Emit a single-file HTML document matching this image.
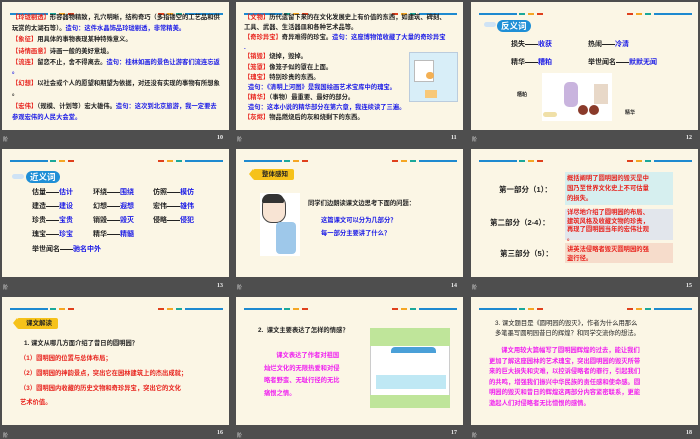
<!DOCTYPE html>
<html><head><meta charset="utf-8"><style>
*{margin:0;padding:0;box-sizing:border-box}
body{width:700px;height:438px;background:#4e4e4e;position:relative;overflow:hidden;font-family:"Liberation Sans","Noto Sans CJK SC",sans-serif;font-weight:bold}
.s{position:absolute;width:227px;height:128px;background:#fbf6e5;overflow:hidden}
.l{position:absolute;height:1.5px}
.lab{position:absolute;color:#ddd;font-size:5px;font-weight:normal}
.num{position:absolute;color:#eee;font-size:6px;font-family:"Liberation Serif",serif}
.t{position:absolute;font-size:6.3px;white-space:nowrap;color:#222;line-height:8px}
.w{font-size:7px}
.r{color:#e8231d}.b{color:#1a1ae6}.m{color:#f020f0}.k{color:#222}
.tag{position:absolute;background:#f6c21a;font-size:6.5px;color:#222;padding:1px 6px 1px 9px;border-radius:2px;height:11px;line-height:9px}
.tag:before{content:"";position:absolute;left:-4px;top:0;border-right:4px solid #f6c21a;border-top:5.5px solid transparent;border-bottom:5.5px solid transparent}
.bub{position:absolute;background:#1f8fd6;color:#fff;font-size:8.5px;border-radius:6px;padding:0 4px;height:12px;line-height:12px}
.ln{display:inline-block;width:13px;height:1px;background:#222;vertical-align:middle}
</style></head><body>

<!-- slide 10 -->
<div class="s" style="left:2px;top:2px">
<div class="l" style="left:8px;top:11px;width:38px;background:#1e8ad0"></div><div class="l" style="left:48px;top:11px;width:6px;background:#1aa89a"></div><div class="l" style="left:57px;top:11px;width:6px;background:#f5a623"></div><div class="l" style="left:66px;top:11px;width:6px;background:#e0401c"></div>
<div class="l" style="left:156px;top:11px;width:6px;background:#e0401c"></div><div class="l" style="left:165px;top:11px;width:6px;background:#f5a623"></div><div class="l" style="left:174px;top:11px;width:6px;background:#1aa89a"></div><div class="l" style="left:183px;top:11px;width:38px;background:#1e8ad0"></div>
<div class="t" style="left:10px;top:12px"><span class="r">【玲珑剔透】</span>形容器物精致，孔穴明晰，结构奇巧（多指镂空的工艺品和供</div>
<div class="t" style="left:10px;top:23px">玩赏的太湖石等）。<span class="b">造句：这件水晶饰品玲珑剔透，非常精美。</span></div>
<div class="t" style="left:10px;top:34px"><span class="r">【象征】</span>用具体的事物表现某种特殊意义。</div>
<div class="t" style="left:10px;top:46px"><span class="r">【诗情画意】</span>诗画一般的美好意境。</div>
<div class="t" style="left:10px;top:57px"><span class="r">【流连】</span>留恋不止，舍不得离去。<span class="b">造句：桂林如画的景色让游客们流连忘返</span></div>
<div class="t b" style="left:10px;top:66px">。</div>
<div class="t" style="left:10px;top:78px"><span class="r">【幻想】</span>以社会或个人的愿望和期望为依据，对还没有实现的事物有所想象</div>
<div class="t" style="left:10px;top:88px">。</div>
<div class="t" style="left:10px;top:101px"><span class="r">【宏伟】</span>（规模、计划等）宏大雄伟。<span class="b">造句：这次到北京旅游，我一定要去</span></div>
<div class="t b" style="left:10px;top:112px">参观宏伟的人民大会堂。</div>
</div>
<div class="lab" style="left:3px;top:136px">阶</div><div class="num" style="left:217px;top:135px">10</div>

<!-- slide 11 -->
<div class="s" style="left:236px;top:2px">
<div class="l" style="left:8px;top:11px;width:38px;background:#1e8ad0"></div><div class="l" style="left:48px;top:11px;width:6px;background:#1aa89a"></div><div class="l" style="left:57px;top:11px;width:6px;background:#f5a623"></div><div class="l" style="left:66px;top:11px;width:6px;background:#e0401c"></div>
<div class="l" style="left:156px;top:11px;width:6px;background:#e0401c"></div><div class="l" style="left:165px;top:11px;width:6px;background:#f5a623"></div><div class="l" style="left:174px;top:11px;width:6px;background:#1aa89a"></div><div class="l" style="left:183px;top:11px;width:38px;background:#1e8ad0"></div>
<div style="position:absolute;left:173px;top:50px;width:49px;height:50px;background:#d8eef8;border:1px solid #bcd"></div>
<div style="position:absolute;left:178px;top:58px;width:20px;height:22px;background:#fff;border:1px solid #bbb"></div>
<div style="position:absolute;left:190px;top:70px;width:8px;height:7px;background:#f3b054;border-radius:4px"></div>
<div style="position:absolute;left:189px;top:88px;width:12px;height:8px;background:#f8c878"></div>
<div class="t" style="left:8px;top:12px"><span class="r">【文物】</span>历代遗留下来的在文化发展史上有价值的东西，如建筑、碑刻、</div>
<div class="t" style="left:8px;top:22px">工具、武器、生活器皿和各种艺术品等。</div>
<div class="t" style="left:8px;top:32px"><span class="r">【奇珍异宝】</span>奇异难得的珍宝。<span class="b">造句：这座博物馆收藏了大量的奇珍异宝</span></div>
<div class="t b" style="left:8px;top:42px">.</div>
<div class="t" style="left:8px;top:51px"><span class="r">【销毁】</span>烧掉，毁掉。</div>
<div class="t" style="left:8px;top:62px"><span class="r">【笼罩】</span>像笼子似的罩在上面。</div>
<div class="t" style="left:8px;top:72px"><span class="r">【瑰宝】</span>特别珍贵的东西。</div>
<div class="t b" style="left:12px;top:82px">造句：《清明上河图》是我国绘画艺术宝库中的瑰宝。</div>
<div class="t" style="left:8px;top:92px"><span class="r">【精华】</span>（事物）最重要、最好的部分。</div>
<div class="t b" style="left:12px;top:102px">造句：这本小说的精华部分在第六章，我连续读了三遍。</div>
<div class="t" style="left:8px;top:112px"><span class="r">【灰烬】</span>物品燃烧后的灰和烧剩下的东西。</div>
</div>
<div class="lab" style="left:237px;top:136px">阶</div><div class="num" style="left:451px;top:135px">11</div>

<!-- slide 12 -->
<div class="s" style="left:471px;top:2px">
<div class="l" style="left:8px;top:11px;width:38px;background:#1e8ad0"></div><div class="l" style="left:48px;top:11px;width:6px;background:#1aa89a"></div><div class="l" style="left:57px;top:11px;width:6px;background:#f5a623"></div><div class="l" style="left:66px;top:11px;width:6px;background:#e0401c"></div>
<div class="l" style="left:156px;top:11px;width:6px;background:#e0401c"></div><div class="l" style="left:165px;top:11px;width:6px;background:#f5a623"></div><div class="l" style="left:174px;top:11px;width:6px;background:#1aa89a"></div><div class="l" style="left:183px;top:11px;width:38px;background:#1e8ad0"></div>
<div style="position:absolute;left:13px;top:20px;width:12px;height:5px;background:#cfe3f5;border-radius:3px"></div>
<div class="bub" style="left:26px;top:18px">反义词</div>
<div class="t w" style="left:40px;top:39px">损失<span class="ln"></span><span class="b">收获</span></div>
<div class="t w" style="left:117px;top:39px">热闹<span class="ln"></span><span class="b">冷清</span></div>
<div class="t w" style="left:40px;top:57px">精华<span class="ln"></span><span class="b">糟粕</span></div>
<div class="t w" style="left:117px;top:57px">举世闻名<span class="ln"></span><span class="b">默默无闻</span></div>
<div style="position:absolute;left:71px;top:71px;width:70px;height:48px;background:#fff"></div>
<div style="position:absolute;left:93px;top:80px;width:14px;height:25px;background:#c9b4de;border-radius:5px"></div>
<div style="position:absolute;left:123px;top:82px;width:14px;height:20px;background:#e8d8c8"></div>
<div style="position:absolute;left:107px;top:103px;width:10px;height:10px;background:#8a3a2a;border-radius:5px"></div>
<div style="position:absolute;left:118px;top:103px;width:10px;height:10px;background:#8a3a2a;border-radius:5px"></div>
<div style="position:absolute;left:72px;top:110px;width:14px;height:5px;background:#f0e0a8;border-radius:3px"></div>
<div class="t" style="left:46px;top:89px;font-size:5px">糟粕</div>
<div class="t" style="left:154px;top:107px;font-size:5px">精华</div>
</div>
<div class="lab" style="left:472px;top:136px">阶</div><div class="num" style="left:686px;top:135px">12</div>

<!-- slide 13 -->
<div class="s" style="left:2px;top:149px">
<div class="l" style="left:8px;top:11px;width:38px;background:#1e8ad0"></div><div class="l" style="left:48px;top:11px;width:6px;background:#1aa89a"></div><div class="l" style="left:57px;top:11px;width:6px;background:#f5a623"></div><div class="l" style="left:66px;top:11px;width:6px;background:#e0401c"></div>
<div class="l" style="left:156px;top:11px;width:6px;background:#e0401c"></div><div class="l" style="left:165px;top:11px;width:6px;background:#f5a623"></div><div class="l" style="left:174px;top:11px;width:6px;background:#1aa89a"></div><div class="l" style="left:183px;top:11px;width:38px;background:#1e8ad0"></div>
<div style="position:absolute;left:10px;top:25px;width:12px;height:5px;background:#cfe3f5;border-radius:3px"></div>
<div class="bub" style="left:24px;top:22px">近义词</div>
<div class="t w" style="left:30px;top:40px">估量<span class="ln"></span><span class="b">估计</span></div>
<div class="t w" style="left:30px;top:54px">建造<span class="ln"></span><span class="b">建设</span></div>
<div class="t w" style="left:30px;top:68px">珍贵<span class="ln"></span><span class="b">宝贵</span></div>
<div class="t w" style="left:30px;top:82px">瑰宝<span class="ln"></span><span class="b">珍宝</span></div>
<div class="t w" style="left:30px;top:97px">举世闻名<span class="ln"></span><span class="b">驰名中外</span></div>
<div class="t w" style="left:91px;top:40px">环绕<span class="ln"></span><span class="b">围绕</span></div>
<div class="t w" style="left:91px;top:54px">幻想<span class="ln"></span><span class="b">遐想</span></div>
<div class="t w" style="left:91px;top:68px">销毁<span class="ln"></span><span class="b">毁灭</span></div>
<div class="t w" style="left:91px;top:82px">精华<span class="ln"></span><span class="b">精髓</span></div>
<div class="t w" style="left:151px;top:40px">仿照<span class="ln"></span><span class="b">模仿</span></div>
<div class="t w" style="left:151px;top:54px">宏伟<span class="ln"></span><span class="b">雄伟</span></div>
<div class="t w" style="left:151px;top:68px">侵略<span class="ln"></span><span class="b">侵犯</span></div>
</div>
<div class="lab" style="left:3px;top:284px">阶</div><div class="num" style="left:217px;top:283px">13</div>

<!-- slide 14 -->
<div class="s" style="left:236px;top:149px">
<div class="l" style="left:8px;top:11px;width:38px;background:#1e8ad0"></div><div class="l" style="left:48px;top:11px;width:6px;background:#1aa89a"></div><div class="l" style="left:57px;top:11px;width:6px;background:#f5a623"></div><div class="l" style="left:66px;top:11px;width:6px;background:#e0401c"></div>
<div class="l" style="left:156px;top:11px;width:6px;background:#e0401c"></div><div class="l" style="left:165px;top:11px;width:6px;background:#f5a623"></div><div class="l" style="left:174px;top:11px;width:6px;background:#1aa89a"></div><div class="l" style="left:183px;top:11px;width:38px;background:#1e8ad0"></div>
<div class="tag" style="left:17px;top:20px">整体感知</div>
<div style="position:absolute;left:24px;top:44px;width:40px;height:63px;background:#fff"></div>
<div style="position:absolute;left:26px;top:46px;width:24px;height:28px;background:#f8e4d4;border:1px solid #444;border-radius:10px"></div>
<div style="position:absolute;left:26px;top:45px;width:22px;height:9px;background:#333;border-radius:8px 8px 2px 2px"></div>
<div style="position:absolute;left:40px;top:73px;width:20px;height:32px;background:#9ec8ea;border-radius:4px"></div>
<div class="t" style="left:72px;top:51px">同学们边朗读课文边思考下面的问题：</div>
<div class="t b" style="left:85px;top:68px">这篇课文可以分为几部分？</div>
<div class="t b" style="left:85px;top:81px">每一部分主要讲了什么？</div>
</div>
<div class="lab" style="left:237px;top:284px">阶</div><div class="num" style="left:451px;top:283px">14</div>

<!-- slide 15 -->
<div class="s" style="left:471px;top:149px">
<div class="l" style="left:8px;top:11px;width:38px;background:#1e8ad0"></div><div class="l" style="left:48px;top:11px;width:6px;background:#1aa89a"></div><div class="l" style="left:57px;top:11px;width:6px;background:#f5a623"></div><div class="l" style="left:66px;top:11px;width:6px;background:#e0401c"></div>
<div class="l" style="left:156px;top:11px;width:6px;background:#e0401c"></div><div class="l" style="left:165px;top:11px;width:6px;background:#f5a623"></div><div class="l" style="left:174px;top:11px;width:6px;background:#1aa89a"></div><div class="l" style="left:183px;top:11px;width:38px;background:#1e8ad0"></div>
<div style="position:absolute;left:94px;top:23px;width:108px;height:33px;background:#d6efef"></div>
<div style="position:absolute;left:94px;top:60px;width:108px;height:31px;background:#e2e6ec"></div>
<div style="position:absolute;left:94px;top:94px;width:108px;height:20px;background:#f6dccb"></div>
<div class="t" style="left:28px;top:37px;font-size:7.5px">第一部分（1）：</div>
<div class="t" style="left:19px;top:70px;font-size:7.5px">第二部分（2-4）：</div>
<div class="t" style="left:29px;top:101px;font-size:7.5px">第三部分（5）：</div>
<div class="t r" style="left:96px;top:25px;line-height:10px">概括阐明了圆明园的毁灭是中<br>国乃至世界文化史上不可估量<br>的损失。</div>
<div class="t r" style="left:96px;top:60px;line-height:8.5px">详尽地介绍了圆明园的布局、<br>建筑风格及收藏文物的珍贵，<br>再现了圆明园当年的宏伟壮观<br>。</div>
<div class="t r" style="left:96px;top:96px;line-height:9px">讲英法侵略者毁灭圆明园的强<br>盗行径。</div>
</div>
<div class="lab" style="left:472px;top:284px">阶</div><div class="num" style="left:686px;top:283px">15</div>

<!-- slide 16 -->
<div class="s" style="left:2px;top:297px">
<div class="l" style="left:8px;top:11px;width:38px;background:#1e8ad0"></div><div class="l" style="left:48px;top:11px;width:6px;background:#1aa89a"></div><div class="l" style="left:57px;top:11px;width:6px;background:#f5a623"></div><div class="l" style="left:66px;top:11px;width:6px;background:#e0401c"></div>
<div class="l" style="left:156px;top:11px;width:6px;background:#e0401c"></div><div class="l" style="left:165px;top:11px;width:6px;background:#f5a623"></div><div class="l" style="left:174px;top:11px;width:6px;background:#1aa89a"></div><div class="l" style="left:183px;top:11px;width:38px;background:#1e8ad0"></div>
<div class="tag" style="left:15px;top:21px">课文解读</div>
<div class="t" style="left:22px;top:43px">1. 课文从哪几方面介绍了昔日的圆明园？</div>
<div class="t r" style="left:18px;top:58px">（1）圆明园的位置与总体布局；</div>
<div class="t r" style="left:18px;top:73px">（2）圆明园的神韵景点，突出它在园林建筑上的杰出成就；</div>
<div class="t r" style="left:18px;top:88px">（3）圆明园内收藏的历史文物和奇珍异宝，突出它的文化</div>
<div class="t r" style="left:18px;top:102px">艺术价值。</div>
</div>
<div class="lab" style="left:3px;top:432px">阶</div><div class="num" style="left:217px;top:430px">16</div>

<!-- slide 17 -->
<div class="s" style="left:236px;top:297px">
<div class="l" style="left:8px;top:11px;width:38px;background:#1e8ad0"></div><div class="l" style="left:48px;top:11px;width:6px;background:#1aa89a"></div><div class="l" style="left:57px;top:11px;width:6px;background:#f5a623"></div><div class="l" style="left:66px;top:11px;width:6px;background:#e0401c"></div>
<div class="l" style="left:156px;top:11px;width:6px;background:#e0401c"></div><div class="l" style="left:165px;top:11px;width:6px;background:#f5a623"></div><div class="l" style="left:174px;top:11px;width:6px;background:#1aa89a"></div><div class="l" style="left:183px;top:11px;width:38px;background:#1e8ad0"></div>
<div class="t" style="left:22px;top:30px">2.&nbsp; 课文主要表达了怎样的情感？</div>
<div class="t m" style="left:28px;top:53px;line-height:12.5px">&nbsp;&nbsp;&nbsp;&nbsp;&nbsp;&nbsp;&nbsp;课文表达了作者对祖国<br>灿烂文化的无限热爱和对侵<br>略者野蛮、无耻行径的无比<br>痛恨之情。</div>
<div style="position:absolute;left:134px;top:31px;width:80px;height:80px;background:#fff;border:1px solid #ccc"></div>
<div style="position:absolute;left:134px;top:31px;width:80px;height:18px;background:#bfe59a"></div>
<div style="position:absolute;left:134px;top:98px;width:80px;height:13px;background:#bfe59a"></div>
<div style="position:absolute;left:140px;top:78px;width:70px;height:14px;background:#bfe8f4"></div>
<div style="position:absolute;left:155px;top:50px;width:45px;height:6px;background:#4aa0d8;border-radius:4px 4px 0 0"></div>
</div>
<div class="lab" style="left:237px;top:432px">阶</div><div class="num" style="left:451px;top:430px">17</div>

<!-- slide 18 -->
<div class="s" style="left:471px;top:297px">
<div class="l" style="left:8px;top:11px;width:38px;background:#1e8ad0"></div><div class="l" style="left:48px;top:11px;width:6px;background:#1aa89a"></div><div class="l" style="left:57px;top:11px;width:6px;background:#f5a623"></div><div class="l" style="left:66px;top:11px;width:6px;background:#e0401c"></div>
<div class="l" style="left:156px;top:11px;width:6px;background:#e0401c"></div><div class="l" style="left:165px;top:11px;width:6px;background:#f5a623"></div><div class="l" style="left:174px;top:11px;width:6px;background:#1aa89a"></div><div class="l" style="left:183px;top:11px;width:38px;background:#1e8ad0"></div>
<div class="t" style="left:24px;top:22px;font-weight:normal;line-height:10px">3. 课文题目是《圆明园的毁灭》，作者为什么用那么<br>多笔墨写圆明园昔日的辉煌？和同学交流你的想法。</div>
<div class="t m" style="left:18px;top:49px;line-height:10.5px">&nbsp;&nbsp;&nbsp;&nbsp;&nbsp;&nbsp;&nbsp;课文用较大篇幅写了圆明园辉煌的过去，能让我们<br>更加了解这座园林的艺术瑰宝，突出圆明园的毁灭所带<br>来的巨大损失和灾难，以控诉侵略者的罪行，引起我们<br>的共鸣，增强我们振兴中华民族的责任感和使命感。圆<br>明园的毁灭和昔日的辉煌这两部分内容紧密联系，更能<br>激起人们对侵略者无比憎恨的感情。</div>
</div>
<div class="lab" style="left:472px;top:432px">阶</div><div class="num" style="left:686px;top:430px">18</div>

</body></html>
